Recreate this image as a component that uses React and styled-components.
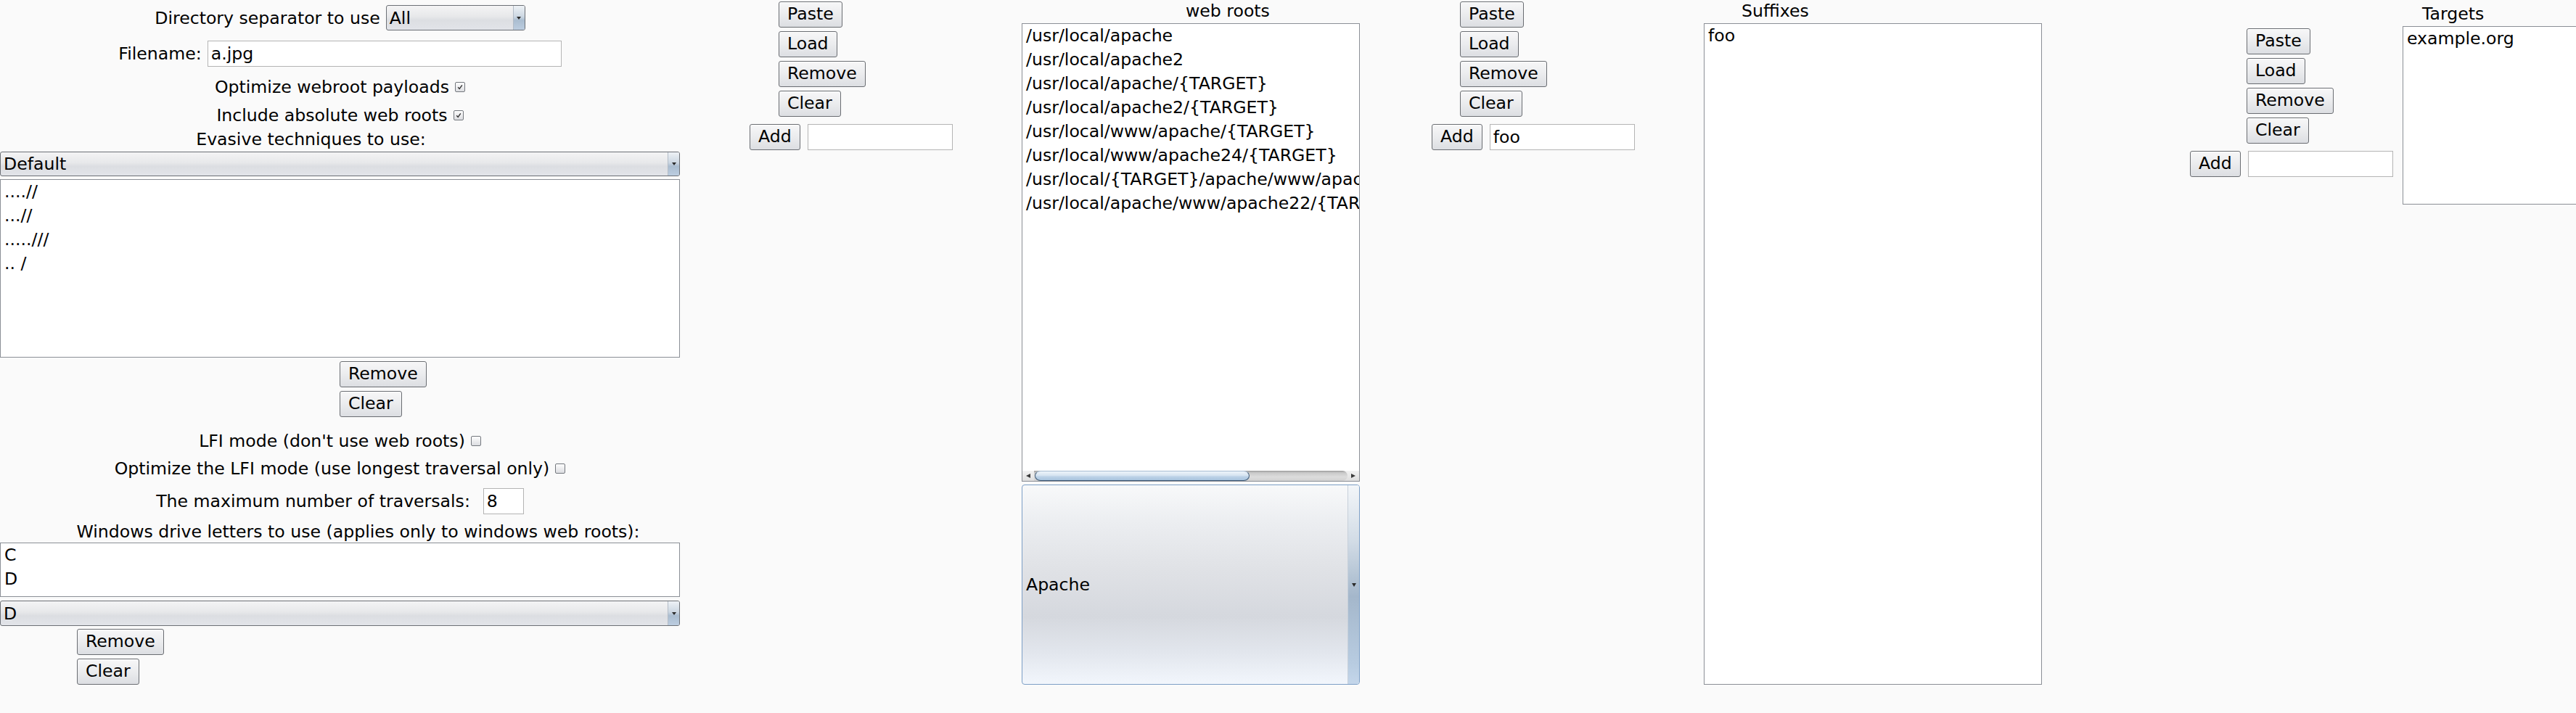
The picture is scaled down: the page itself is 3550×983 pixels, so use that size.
import React from 'react';
import styled, { createGlobalStyle } from 'styled-components';

const FS = '23.6px';

const GlobalStyle = createGlobalStyle`
  html, body { margin: 0; padding: 0; background: #fafafa; overflow: hidden; }
  body {
    font-family: "DejaVu Sans", "Liberation Sans", sans-serif;
    font-size: ${FS};
    color: #000;
  }
  * { box-sizing: border-box; }
`;

const Page = styled.div`
  display: flex;
  align-items: flex-start;
  width: max-content;
  height: 983px;
  background: #fafafa;
`;

const LeftColumn = styled.div`
  width: 937px;
  flex-shrink: 0;
  display: flex;
  flex-direction: column;
`;

const FormRow = styled.div`
  display: flex;
  align-items: center;
  justify-content: center;
  gap: ${(p) => p.$gap ?? 8}px;
  height: ${(p) => p.$h}px;
  margin-top: ${(p) => p.$mt || 0}px;
  padding-left: ${(p) => p.$pl || 0}px;
  padding-right: ${(p) => p.$pr || 0}px;
  white-space: nowrap;
`;

const Label = styled.span`
  font-size: ${FS};
  line-height: 28px;
`;

const SelectBox = styled.div`
  display: flex;
  align-items: stretch;
  width: ${(p) => p.$w};
  height: ${(p) => p.$h}px;
  margin-top: ${(p) => p.$mt || 0}px;
  flex-shrink: 0;
  border: 1px solid #6c7076;
  border-radius: 3px;
  overflow: hidden;
  background: linear-gradient(#f4f4f5 0%, #e7e8ea 45%, #dcdee2 60%, #e2e4e9 100%);
`;

const SelectValue = styled.span`
  flex: 1;
  display: flex;
  align-items: center;
  padding-left: 4px;
  font-size: ${FS};
`;

const SelectArrow = styled.span`
  width: 16px;
  display: flex;
  align-items: center;
  justify-content: center;
  border-left: 1px solid #b3bcc7;
  background: linear-gradient(#eef2f6 0%, #ccd7e2 45%, #aabdd0 60%, #bccde0 100%);
  &::after {
    content: '';
    border-left: 3px solid transparent;
    border-right: 3px solid transparent;
    border-top: 4px solid #2a2a2a;
  }
`;

const Field = styled.input`
  width: ${(p) => p.$w}px;
  height: 36px;
  flex-shrink: 0;
  border: 1px solid #b4b4b4;
  background: #fff;
  padding: 0 4px;
  font-family: inherit;
  font-size: ${FS};
  color: #000;
  outline: none;
`;

const CheckBox = styled.span`
  width: 14px;
  height: 14px;
  flex-shrink: 0;
  border: 1px solid #74787e;
  border-radius: 2px;
  background: linear-gradient(#fdfdfd, #dcdde1);
  display: inline-flex;
  align-items: center;
  justify-content: center;
`;

const ListBox = styled.div`
  width: ${(p) => p.$w || '100%'};
  height: ${(p) => p.$h}px;
  margin-top: ${(p) => p.$mt || 0}px;
  flex-shrink: 0;
  border: 1px solid #8b8f96;
  background: #fff;
  overflow: hidden;
  display: flex;
  flex-direction: column;
`;

const ListItems = styled.div`
  flex: 1;
  overflow: hidden;
`;

const ListItem = styled.div`
  height: 33px;
  line-height: 33px;
  padding: 0 5px;
  white-space: nowrap;
  font-size: ${FS};
`;

const ButtonStack = styled.div`
  display: flex;
  flex-direction: column;
  align-items: flex-start;
  gap: 5px;
  margin-top: ${(p) => p.$mt || 0}px;
  padding-left: ${(p) => p.$pl || 0}px;
`;

const Btn = styled.button`
  height: 36px;
  padding: 0 11px;
  font-family: inherit;
  font-size: ${FS};
  line-height: 1;
  color: #000;
  border: 1px solid #6a6d72;
  border-radius: 3px;
  background: linear-gradient(#f7f7f8 0%, #ebecee 50%, #dcdee2 100%);
  box-shadow: inset 0 1px 0 #ffffff;
  cursor: default;
`;

const SideGroup = styled.div`
  width: 279px;
  flex-shrink: 0;
  margin-left: ${(p) => p.$ml}px;
  margin-top: ${(p) => p.$mt || 0}px;
  display: flex;
  flex-direction: column;
`;

const AddRow = styled.div`
  display: flex;
  gap: 10px;
  margin-top: 10px;
`;

const ListColumn = styled.div`
  width: 466px;
  flex-shrink: 0;
  margin-left: ${(p) => p.$ml}px;
  margin-top: ${(p) => p.$mt || 0}px;
  display: flex;
  flex-direction: column;
`;

const ColTitle = styled.div`
  height: 28px;
  line-height: 28px;
  margin-top: 1px;
  margin-bottom: 3px;
  padding-left: ${(p) => p.$pl}px;
  font-size: ${FS};
  white-space: nowrap;
`;

const HScroll = styled.div`
  height: 14px;
  flex-shrink: 0;
  display: flex;
  align-items: stretch;
  background: linear-gradient(#f2f2f2, #dedede);
`;

const ScrollArrow = styled.span`
  width: 16px;
  display: flex;
  align-items: center;
  justify-content: center;
  &::after {
    content: '';
    border-top: 3px solid transparent;
    border-bottom: 3px solid transparent;
    ${(p) => (p.$dir === 'left' ? 'border-right: 6px solid #3a3a3a;' : 'border-left: 6px solid #3a3a3a;')}
  }
`;

const ScrollTrack = styled.div`
  flex: 1;
  display: flex;
  padding-left: 1px;
  background: linear-gradient(#9a9a9a 0%, #c9c9c9 20%, #dcdcdc 60%, #d2d2d2 100%);
  border-radius: 0 7px 7px 0;
`;

const ScrollThumb = styled.div`
  width: 296px;
  border: 1px solid #3f5b78;
  border-top-color: #a7bdd2;
  border-radius: 8px / 7px;
  background: linear-gradient(#eef4fa 0%, #d6e4f1 45%, #bcd2e7 60%, #a9c4de 100%);
`;

const BigCombo = styled.div`
  height: 276px;
  margin-top: 4px;
  display: flex;
  border: 1px solid #7d9fc6;
  border-radius: 4px;
  overflow: hidden;
  background: linear-gradient(
    #f8f9fa 0%,
    #eceef1 18%,
    #e0e2e6 42%,
    #d5d8de 66%,
    #e2e6ed 84%,
    #f2f6fc 100%
  );
`;

const ComboValue = styled.span`
  flex: 1;
  display: flex;
  align-items: center;
  padding-left: 5px;
  font-size: ${FS};
`;

const ComboArrow = styled.span`
  width: 16px;
  display: flex;
  align-items: center;
  justify-content: center;
  border-left: 1px solid #c7d0da;
  background: linear-gradient(#f3f6f9 0%, #d2dce6 28%, #a4b7cb 56%, #b8cce1 90%, #c4d6ea 100%);
  &::after {
    content: '';
    border-left: 3px solid transparent;
    border-right: 3px solid transparent;
    border-top: 5px solid #2a2a2a;
  }
`;

const Check = ({ checked }) => (
  <CheckBox>
    {checked && (
      <svg width="10" height="10" viewBox="0 0 10 10">
        <path d="M2.2 5.2 L4.2 7.4 L7.8 2.4" fill="none" stroke="#333" strokeWidth="1.4" />
      </svg>
    )}
  </CheckBox>
);

const Select = ({ value, w, h, mt }) => (
  <SelectBox $w={w} $h={h} $mt={mt}>
    <SelectValue>{value}</SelectValue>
    <SelectArrow />
  </SelectBox>
);

const ListGroupButtons = ({ ml, mt, btnPl, addValue }) => (
  <SideGroup $ml={ml} $mt={mt}>
    <ButtonStack $pl={btnPl}>
      <Btn>Paste</Btn>
      <Btn>Load</Btn>
      <Btn>Remove</Btn>
      <Btn>Clear</Btn>
    </ButtonStack>
    <AddRow>
      <Btn>Add</Btn>
      <Field $w={200} defaultValue={addValue} readOnly />
    </AddRow>
  </SideGroup>
);

const webRoots = [
  '/usr/local/apache',
  '/usr/local/apache2',
  '/usr/local/apache/{TARGET}',
  '/usr/local/apache2/{TARGET}',
  '/usr/local/www/apache/{TARGET}',
  '/usr/local/www/apache24/{TARGET}',
  '/usr/local/{TARGET}/apache/www/apache22',
  '/usr/local/apache/www/apache22/{TARGET}',
];

const evasive = ['....//', '...//', '.....///', '.. /'];

export default function App() {
  return (
    <>
      <GlobalStyle />
      <Page>
        <LeftColumn>
          <FormRow $h={35} $mt={7}>
            <Label>Directory separator to use</Label>
            <Select value="All" w="192px" h={35} />
          </FormRow>
          <FormRow $h={36} $mt={14}>
            <Label>Filename:</Label>
            <Field $w={488} defaultValue="a.jpg" readOnly />
          </FormRow>
          <FormRow $h={28} $mt={14}>
            <Label>Optimize webroot payloads</Label>
            <Check checked />
          </FormRow>
          <FormRow $h={28} $mt={11}>
            <Label>Include absolute web roots</Label>
            <Check checked />
          </FormRow>
          <FormRow $h={28} $mt={5} $pr={80}>
            <Label>Evasive techniques to use:</Label>
          </FormRow>
          <Select value="Default" w="100%" h={34} mt={3} />
          <ListBox $h={246} $mt={4}>
            <ListItems>
              {evasive.map((e) => (
                <ListItem key={e}>{e}</ListItem>
              ))}
            </ListItems>
          </ListBox>
          <ButtonStack $mt={5} $pl={468}>
            <Btn>Remove</Btn>
            <Btn>Clear</Btn>
          </ButtonStack>
          <FormRow $h={28} $mt={19}>
            <Label>LFI mode (don't use web roots)</Label>
            <Check />
          </FormRow>
          <FormRow $h={28} $mt={10}>
            <Label>Optimize the LFI mode (use longest traversal only)</Label>
            <Check />
          </FormRow>
          <FormRow $h={36} $mt={13} $gap={18}>
            <Label>The maximum number of traversals:</Label>
            <Field $w={56} defaultValue="8" readOnly />
          </FormRow>
          <FormRow $h={28} $mt={10} $pl={50}>
            <Label>Windows drive letters to use (applies only to windows web roots):</Label>
          </FormRow>
          <ListBox $h={75} $mt={1}>
            <ListItems>
              <ListItem>C</ListItem>
              <ListItem>D</ListItem>
            </ListItems>
          </ListBox>
          <Select value="D" w="100%" h={35} mt={5} />
          <ButtonStack $mt={4} $pl={106}>
            <Btn>Remove</Btn>
            <Btn>Clear</Btn>
          </ButtonStack>
        </LeftColumn>

        <ListGroupButtons ml={96} mt={2} btnPl={40} addValue="" />

        <ListColumn $ml={96}>
          <ColTitle $pl={226}>web roots</ColTitle>
          <ListBox $h={632}>
            <ListItems>
              {webRoots.map((r) => (
                <ListItem key={r}>{r}</ListItem>
              ))}
            </ListItems>
            <HScroll>
              <ScrollArrow $dir="left" />
              <ScrollTrack>
                <ScrollThumb />
              </ScrollTrack>
              <ScrollArrow $dir="right" />
            </HScroll>
          </ListBox>
          <BigCombo>
            <ComboValue>Apache</ComboValue>
            <ComboArrow />
          </BigCombo>
        </ListColumn>

        <ListGroupButtons ml={99} mt={2} btnPl={39} addValue="foo" />

        <ListColumn $ml={96}>
          <ColTitle $pl={52}>Suffixes</ColTitle>
          <ListBox $h={912}>
            <ListItems>
              <ListItem>foo</ListItem>
            </ListItems>
          </ListBox>
        </ListColumn>

        <ListGroupButtons ml={204} mt={39} btnPl={78} addValue="" />

        <ListColumn $ml={14} $mt={4}>
          <ColTitle $pl={27}>Targets</ColTitle>
          <ListBox $h={246}>
            <ListItems>
              <ListItem>example.org</ListItem>
            </ListItems>
          </ListBox>
        </ListColumn>
      </Page>
    </>
  );
}
